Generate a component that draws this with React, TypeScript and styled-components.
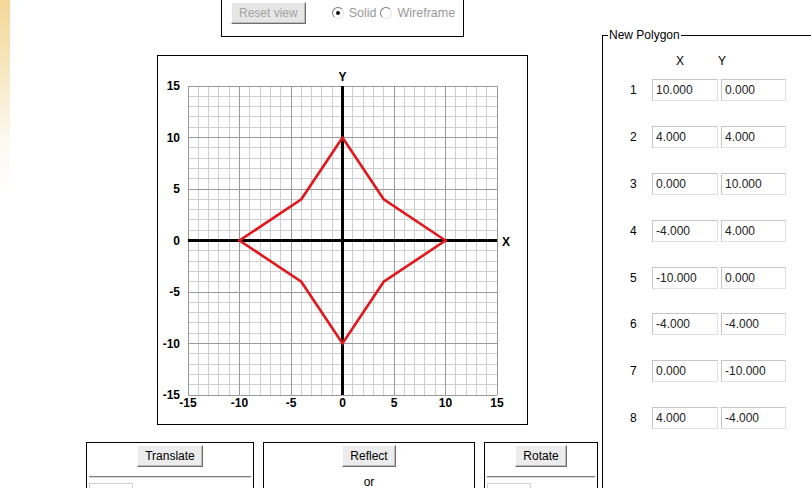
import React from "react";
import styled, { createGlobalStyle } from "styled-components";

const GlobalStyle = createGlobalStyle`
  html, body {
    margin: 0;
    padding: 0;
    background: #fff;
  }
  body {
    font-family: "Liberation Sans", Arial, sans-serif;
    font-size: 12px;
    color: #000;
  }
`;

const FONT = `"Liberation Sans", Arial, sans-serif`;

const Page = styled.div`
  display: flex;
  width: 811px;
  height: 488px;
  overflow: hidden;
  background: linear-gradient(to bottom, #f3d797 0%, #f7e7bf 35%, #fcf8ee 70%, #fff 100%) no-repeat 0 0 / 10px 195px,
    #fff;
`;

const MainColumn = styled.div`
  display: flex;
  flex-direction: column;
  width: 602px;
  flex: none;
`;

const ViewBox = styled.div`
  display: flex;
  align-items: center;
  margin: -10px 0 0 221px;
  width: 243px;
  box-sizing: border-box;
  border: 1px solid #000;
  padding: 11px 0 12px 9px;
`;

const Button = styled.button`
  height: 22px;
  padding: 0 7px;
  font: 12px ${FONT};
  color: ${(p) => (p.disabled ? "#a3a3a3" : "#000")};
  background: ${(p) => (p.disabled ? "#e6e6e6" : "#ececec")};
  border: 1px solid;
  border-color: #fdfdfd #6e6e6e #6e6e6e #fdfdfd;
  box-shadow: inset -1px -1px 0 #bcbcbc;
  cursor: default;
`;

const RadioGroup = styled.div`
  display: flex;
  align-items: center;
  margin-left: 26px;
  color: #9a9a9a;
  font-size: 12.5px;
`;

const RadioOption = styled.label`
  display: flex;
  align-items: center;
  gap: 5px;
  margin-right: 4px;
`;

const RadioDot = styled.span<{ $checked?: boolean }>`
  position: relative;
  width: 10px;
  height: 10px;
  border-radius: 50%;
  border: 1px solid;
  border-color: #7a7a7a #e2e2e2 #e2e2e2 #7a7a7a;
  background: #fff;

  &::after {
    content: "";
    display: ${(p) => (p.$checked ? "block" : "none")};
    position: absolute;
    left: 3px;
    top: 3px;
    width: 4px;
    height: 4px;
    border-radius: 50%;
    background: #111;
  }
`;

const GraphBox = styled.div`
  margin: 18px 0 0 157px;
  width: 371px;
  height: 370px;
  box-sizing: border-box;
  border: 1px solid #000;
`;

const ToolRow = styled.div`
  display: flex;
  margin-top: 17px;
  padding-left: 86px;
`;

const ToolBox = styled.div<{ $width: number; $gap: number }>`
  width: ${(p) => p.$width}px;
  margin-right: ${(p) => p.$gap}px;
  height: 80px;
  box-sizing: border-box;
  border: 1px solid #000;
  padding: 2px 2px 0;
  text-align: center;
  flex: none;
`;

const Divider = styled.hr`
  margin: 9px 0 5px;
  height: 0;
  border: none;
  border-top: 1px solid #808080;
  border-bottom: 1px solid #d8d8d8;
`;

const SmallInput = styled.div`
  width: 44px;
  height: 20px;
  box-sizing: border-box;
  border: 1px solid #d0d0d0;
`;

const OrText = styled.div`
  margin-top: 8px;
  line-height: 14px;
`;

const Fieldset = styled.fieldset`
  margin: 28px 0 0;
  padding: 12px 0 0 5px;
  width: 260px;
  height: 520px;
  flex: none;
  border: 1px solid #000;
  box-sizing: border-box;
  font: 12px ${FONT};
`;

const Legend = styled.legend`
  padding: 0 1px;
  line-height: 14px;
`;

const HeaderRow = styled.div`
  display: flex;
  gap: 34px;
  padding-left: 68px;
  line-height: 14px;
`;

const PointList = styled.div`
  display: flex;
  flex-direction: column;
  gap: 24.9px;
  margin-top: 11px;
`;

const PointRow = styled.div`
  display: flex;
  align-items: center;
  gap: 3px;
`;

const RowLabel = styled.span`
  width: 41px;
  padding-left: 22px;
  box-sizing: border-box;
`;

const CoordInput = styled.input<{ $width: number }>`
  width: ${(p) => p.$width}px;
  height: 22px;
  box-sizing: border-box;
  margin: 0;
  padding: 0 3px;
  border: 1px solid;
  border-color: #c6c6c6 #e0e0e0 #e0e0e0 #c6c6c6;
  font: 12px ${FONT};
  color: #222;
  background: #fff;
  outline: none;
`;

const points: [number, number][] = [
  [10, 0],
  [4, 4],
  [0, 10],
  [-4, 4],
  [-10, 0],
  [-4, -4],
  [0, -10],
  [4, -4],
];

const U = 10.3;
const G0 = 30;
const px = (v: number) => G0 + (v + 15) * U;
const py = (v: number) => G0 + (15 - v) * U;

const Graph = () => {
  const ticks = Array.from({ length: 31 }, (_, i) => i - 15);
  const minor = ticks.filter((t) => t % 5 !== 0);
  const major = ticks.filter((t) => t % 5 === 0);
  const labels = [-15, -10, -5, 0, 5, 10, 15];
  const labelStyle = { fontFamily: FONT, fontSize: 12, fontWeight: 700 };
  return (
    <svg width="369" height="368" viewBox="0 0 369 368">
      <g strokeWidth="1" shapeRendering="crispEdges">
        {minor.map((t) => (
          <g key={t} stroke="#cfcfcf">
            <line x1={px(t)} x2={px(t)} y1={py(15)} y2={py(-15)} />
            <line x1={px(-15)} x2={px(15)} y1={py(t)} y2={py(t)} />
          </g>
        ))}
        {major.map((t) => (
          <g key={t} stroke="#999">
            <line x1={px(t)} x2={px(t)} y1={py(15)} y2={py(-15)} />
            <line x1={px(-15)} x2={px(15)} y1={py(t)} y2={py(t)} />
          </g>
        ))}
      </g>
      <line x1={px(-15)} x2={px(15)} y1={py(0)} y2={py(0)} stroke="#000" strokeWidth="3" />
      <line x1={px(0)} x2={px(0)} y1={py(15)} y2={py(-15)} stroke="#000" strokeWidth="3" />
      <polygon
        points={points.map(([x, y]) => `${px(x)},${py(y)}`).join(" ")}
        fill="none"
        stroke="#e3161b"
        strokeWidth="2.6"
        strokeLinejoin="miter"
      />
      {labels.map((v) => (
        <text key={`y${v}`} x={22} y={py(v)} textAnchor="end" dominantBaseline="central" style={labelStyle}>
          {v}
        </text>
      ))}
      {labels.map((v) => (
        <text key={`x${v}`} x={px(v)} y={347} textAnchor="middle" dominantBaseline="central" style={labelStyle}>
          {v}
        </text>
      ))}
      <text x={px(0)} y={20.5} textAnchor="middle" dominantBaseline="central" style={labelStyle}>
        Y
      </text>
      <text x={348} y={186} textAnchor="middle" dominantBaseline="central" style={labelStyle}>
        X
      </text>
    </svg>
  );
};

const fmt = (n: number) => n.toFixed(3);

export default function App() {
  return (
    <>
      <GlobalStyle />
      <Page>
        <MainColumn>
          <ViewBox>
            <Button disabled>Reset view</Button>
            <RadioGroup>
              <RadioOption>
                <RadioDot $checked />
                Solid
              </RadioOption>
              <RadioOption>
                <RadioDot />
                Wireframe
              </RadioOption>
            </RadioGroup>
          </ViewBox>
          <GraphBox>
            <Graph />
          </GraphBox>
          <ToolRow>
            <ToolBox $width={168} $gap={9}>
              <Button>Translate</Button>
              <Divider />
              <SmallInput />
            </ToolBox>
            <ToolBox $width={212} $gap={9}>
              <Button>Reflect</Button>
              <OrText>or</OrText>
            </ToolBox>
            <ToolBox $width={114} $gap={0}>
              <Button>Rotate</Button>
              <Divider />
              <SmallInput />
            </ToolBox>
          </ToolRow>
        </MainColumn>
        <Fieldset>
          <Legend>New Polygon</Legend>
          <HeaderRow>
            <span>X</span>
            <span>Y</span>
          </HeaderRow>
          <PointList>
            {points.map(([x, y], i) => (
              <PointRow key={i}>
                <RowLabel>{i + 1}</RowLabel>
                <CoordInput $width={66} defaultValue={fmt(x)} />
                <CoordInput $width={65} defaultValue={fmt(y)} />
              </PointRow>
            ))}
          </PointList>
        </Fieldset>
      </Page>
    </>
  );
}
